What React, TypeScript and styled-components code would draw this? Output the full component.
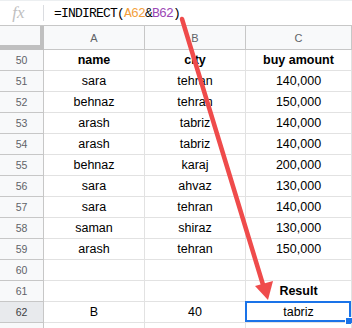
import React from "react";
import styled, { createGlobalStyle } from "styled-components";

const Global = createGlobalStyle`
  html, body { margin: 0; padding: 0; background: #fff; overflow: hidden; }
  body { width: 352px; height: 328px; }
`;

const Page = styled.div`
  position: relative;
  width: 352px;
  height: 328px;
  overflow: hidden;
  font-family: Arial, "Liberation Sans", sans-serif;
`;

const FormulaBar = styled.div`
  display: flex;
  align-items: center;
  border-top: 1px solid #eceff1;
  border-bottom: 1px solid #c7c7c7;
  box-sizing: border-box;
  height: 26px;
  background: #fff;
`;

const FxBox = styled.div`
  width: 44px;
  height: 16px;
  display: flex;
  align-items: center;
  justify-content: center;
  border-right: 1px solid #dadce0;
  box-sizing: border-box;
  color: #c0c0c0;
  font-family: "Liberation Serif", serif;
  font-style: italic;
  font-size: 17px;
  padding-right: 6px;
`;

const Formula = styled.div`
  padding-left: 10px;
  font-family: "Liberation Mono", monospace;
  font-size: 13px;
  letter-spacing: -0.8px;
  color: #000;
`;

const Ref = styled.span<{ $c: string }>`
  color: ${(p) => p.$c};
`;

const Grid = styled.div`
  display: grid;
  grid-template-columns: 44px 101px 101px 106px;
  grid-template-rows: 24px;
  grid-auto-rows: 21px;
`;

const Corner = styled.div`
  box-sizing: border-box;
  background: #f8f9fa;
  border-right: 4px solid #c0c0c0;
  border-bottom: 5px solid #c0c0c0;
`;

const ColHead = styled.div`
  box-sizing: border-box;
  background: #f8f9fa;
  border-right: 1px solid #c7c7c7;
  border-bottom: 1px solid #c7c7c7;
  display: flex;
  align-items: center;
  justify-content: center;
  font-size: 11px;
  color: #5f6368;
`;

const RowHead = styled.div<{ $active?: boolean }>`
  box-sizing: border-box;
  background: ${(p) => (p.$active ? "#e8eaed" : "#f8f9fa")};
  border-right: 1px solid #c7c7c7;
  border-bottom: 1px solid #c7c7c7;
  display: flex;
  align-items: center;
  justify-content: center;
  font-size: 10.5px;
  color: ${(p) => (p.$active ? "#3c4043" : "#5f6368")};
`;

const Cell = styled.div<{ $bold?: boolean }>`
  position: relative;
  box-sizing: border-box;
  border-right: 1px solid #e2e2e2;
  border-bottom: 1px solid #e2e2e2;
  display: flex;
  align-items: center;
  justify-content: center;
  font-size: 12.5px;
  font-weight: ${(p) => (p.$bold ? 700 : 400)};
  color: #000;
  white-space: nowrap;
`;

const Selection = styled.div`
  position: absolute;
  left: -1px;
  top: -1px;
  right: 0;
  bottom: 0;
  border: 2px solid #1a73e8;
  pointer-events: none;
`;

const Handle = styled.div`
  position: absolute;
  right: -2px;
  bottom: -3px;
  width: 6px;
  height: 6px;
  background: #1a73e8;
  border: 1px solid #fff;
`;

const Arrow = styled.svg`
  position: absolute;
  left: 0;
  top: 0;
  pointer-events: none;
`;

type Row = { n: number; a: string; b: string; c: string; bold?: boolean };

const rows: Row[] = [
  { n: 50, a: "name", b: "city", c: "buy amount", bold: true },
  { n: 51, a: "sara", b: "tehran", c: "140,000" },
  { n: 52, a: "behnaz", b: "tehran", c: "150,000" },
  { n: 53, a: "arash", b: "tabriz", c: "140,000" },
  { n: 54, a: "arash", b: "tabriz", c: "140,000" },
  { n: 55, a: "behnaz", b: "karaj", c: "200,000" },
  { n: 56, a: "sara", b: "ahvaz", c: "130,000" },
  { n: 57, a: "sara", b: "tehran", c: "140,000" },
  { n: 58, a: "saman", b: "shiraz", c: "130,000" },
  { n: 59, a: "arash", b: "tehran", c: "150,000" },
  { n: 60, a: "", b: "", c: "" },
];

export default function App() {
  return (
    <Page>
      <Global />
      <FormulaBar>
        <FxBox>fx</FxBox>
        <Formula>
          =INDIRECT(<Ref $c="#f29f3d">A62</Ref>&amp;<Ref $c="#9b47b5">B62</Ref>)
        </Formula>
      </FormulaBar>
      <Grid>
        <Corner />
        <ColHead>A</ColHead>
        <ColHead>B</ColHead>
        <ColHead>C</ColHead>
        {rows.map((r) => (
          <React.Fragment key={r.n}>
            <RowHead>{r.n}</RowHead>
            <Cell $bold={r.bold}>{r.a}</Cell>
            <Cell $bold={r.bold}>{r.b}</Cell>
            <Cell $bold={r.bold}>{r.c}</Cell>
          </React.Fragment>
        ))}
        <RowHead>61</RowHead>
        <Cell />
        <Cell />
        <Cell $bold>Result</Cell>
        <RowHead $active>62</RowHead>
        <Cell>B</Cell>
        <Cell>40</Cell>
        <Cell>
          tabriz
          <Selection />
          <Handle />
        </Cell>
        <RowHead />
        <Cell />
        <Cell />
        <Cell />
      </Grid>
      <Arrow width="352" height="328" viewBox="0 0 352 328">
        <line x1="182" y1="19" x2="264" y2="288" stroke="#ef4b4b" strokeWidth="4.5" strokeLinecap="round" />
        <polygon points="268,300 255,286 273,281" fill="#ef4b4b" />
      </Arrow>
    </Page>
  );
}
